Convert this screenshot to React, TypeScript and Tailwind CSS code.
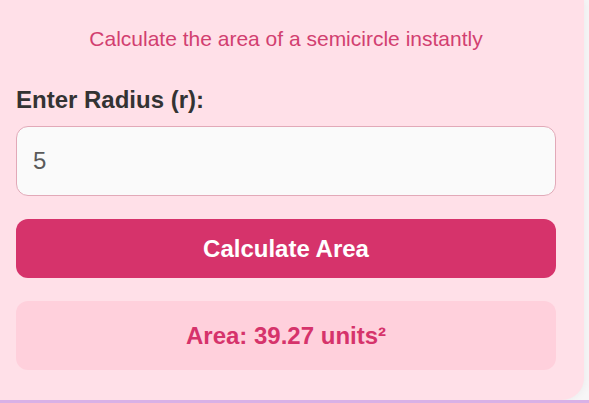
import React, { useState } from "react";

export default function App() {
  const [radius, setRadius] = useState("5");
  const [area, setArea] = useState<string>("39.27");

  const calculate = () => {
    const r = parseFloat(radius);
    if (isNaN(r) || r < 0) return;
    setArea(((Math.PI * r * r) / 2).toFixed(2));
  };

  return (
    <div
      className="w-[589px] h-[403px] flex flex-col bg-[#f7f6f7] overflow-hidden"
      style={{ fontFamily: '"Liberation Sans", Arial, sans-serif' }}
    >
      <div className="flex-1 flex">
        {/* Calculator card */}
        <div className="w-[584px] bg-[#ffe0e8] rounded-br-[22px] shadow-[0_0_10px_rgba(0,0,0,0.06)] pl-4 pr-[28px] pt-[26px] pb-[28px] flex flex-col">
          <p className="text-center text-[21px] leading-[25px] text-[#d23f70]">
            Calculate the area of a semicircle instantly
          </p>

          <label className="mt-[34px] text-[24px] leading-[29px] font-bold text-[#333333]">
            Enter Radius (r):
          </label>

          <input
            type="text"
            value={radius}
            onChange={(e) => setRadius(e.target.value)}
            className="mt-[12px] h-[70px] w-full bg-[#fafafa] border border-[#e2a9b8] rounded-[12px] px-4 text-[24px] text-[#5a5a5a] outline-none"
          />

          <button
            onClick={calculate}
            className="mt-[23px] h-[59px] w-full bg-[#d6336b] rounded-[12px] text-white text-[24px] font-bold"
          >
            Calculate Area
          </button>

          <div className="mt-[23px] h-[69px] w-full bg-[#ffd0dc] rounded-[12px] flex items-center justify-center text-[24px] font-bold text-[#d6336b]">
            Area: {area} units²
          </div>
        </div>
      </div>
      <div className="h-[3px] bg-[#d9b1e6]" />
    </div>
  );
}
